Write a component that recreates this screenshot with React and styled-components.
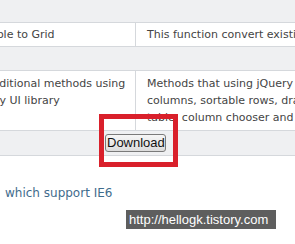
import styled, { createGlobalStyle } from "styled-components";

const GlobalStyle = createGlobalStyle`
  html, body {
    margin: 0;
    padding: 0;
    background: #ffffff;
    overflow: hidden;
  }
  body {
    width: 295px;
    height: 244px;
  }
`

const Page = styled.div`
  position: relative;
  width: 295px;
  height: 244px;
  overflow: hidden;
  font-family: "DejaVu Sans", Verdana, sans-serif;
`

const Table = styled.div`
  width: 480px;
  margin-left: -25px;
  display: flex;
  flex-direction: column;
`

const GroupRow = styled.div`
  height: ${props => props.h}px;
  background-color: #eff0f2;
  border-bottom: 1px solid #d5d8dc;
  display: flex;
  align-items: center;
`

const Row = styled.div`
  display: grid;
  grid-template-columns: 160px 1fr;
  background-color: #ffffff;
  border-bottom: 1px solid #d5d8dc;
`

const Cell = styled.div`
  padding: ${props => props.multi ? '4px 10px 4px' : '0 10px'};
  line-height: ${props => props.multi ? '17px' : '23px'};
  font-size: 11px;
  color: #444444;
  white-space: nowrap;
  overflow: hidden;
`

const DescCell = styled(Cell)`
  border-left: 1px solid #d5d8dc;
  padding-left: 11px;
`

const DownloadButton = styled.button`
  margin-left: 130px;
  height: 18px;
  width: 61px;
  padding: 0 1px;
  font-family: "Liberation Sans", Arial, sans-serif;
  font-size: 13px;
  line-height: 16px;
  color: #111111;
  background: linear-gradient(#f6f6f6, #dcdcdc);
  border: 1px solid #7a7a7a;
  border-radius: 3px;
`

const SupportLink = styled.a`
  display: block;
  margin: 29px 0 0 5px;
  font-size: 12px;
  line-height: 16px;
  color: #3f6c8d;
  text-decoration: none;
  white-space: nowrap;
`

const Highlight = styled.div`
  position: absolute;
  left: 99px;
  top: 114px;
  width: 79px;
  height: 53px;
  box-sizing: border-box;
  border: 5px solid #d9202b;
  pointer-events: none;
`

const Watermark = styled.div`
  position: absolute;
  left: 126px;
  top: 210px;
  width: 150px;
  height: 19px;
  padding-left: 3px;
  box-sizing: border-box;
  background-color: #5e5e5e;
  color: #ffffff;
  font-family: "Liberation Sans", Arial, sans-serif;
  font-size: 13px;
  line-height: 19px;
  white-space: nowrap;
`

export default function App() {
  return (
    <Page>
      <GlobalStyle />
      <Table>
        <GroupRow h={22} />
        <Row>
          <Cell>Table to Grid</Cell>
          <DescCell>This function convert existing table to grid</DescCell>
        </Row>
        <GroupRow h={23} />
        <Row>
          <Cell multi>
            Additional methods using<br />
            Any UI library
          </Cell>
          <DescCell multi>
            Methods that using jQuery UI to add<br />
            columns, sortable rows, draggable<br />
            table, column chooser and more
          </DescCell>
        </Row>
        <GroupRow h={24}>
          <DownloadButton>Download</DownloadButton>
        </GroupRow>
      </Table>
      <SupportLink href="#">which support IE6</SupportLink>
      <Highlight />
      <Watermark>http://hellogk.tistory.com</Watermark>
    </Page>
  )
}
